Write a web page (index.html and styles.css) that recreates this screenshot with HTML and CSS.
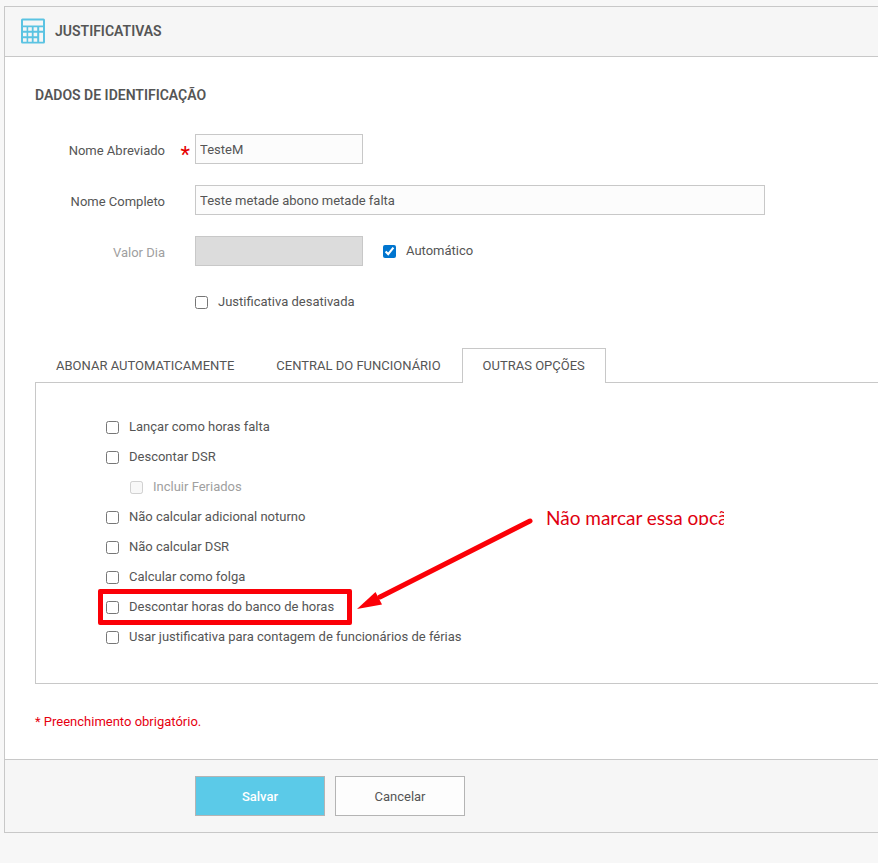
FILE: index.html
```html
<!DOCTYPE html>
<html lang="pt-BR">
<head>
<meta charset="utf-8">
<title>Justificativas</title>
<link rel="stylesheet" href="styles.css">
</head>
<body>
<main class="card">
  <header class="card-header">
    <svg class="card-icon" viewBox="0 0 24 26" aria-hidden="true">
      <path fill="#5bc3e2" fill-rule="evenodd" d="M1.500 0.500h21a1.500 1.500 0 0 1 1.500 1.500v22a1.500 1.500 0 0 1-1.500 1.500h-21a1.500 1.500 0 0 1-1.500-1.500v-22a1.500 1.500 0 0 1 1.500-1.500z M2 2.500v5h20v-5z M2 9.200v3.600h3.600v-3.600z M7.200 9.200v3.600h3.600v-3.600z M12.600 9.200v3.600h3.600v-3.600z M18.200 9.200v3.600h3.800v-3.600z M2 14.700v3.600h3.600v-3.600z M7.200 14.700v3.600h3.600v-3.600z M12.600 14.700v3.600h3.600v-3.600z M18.200 14.700v9h3.800v-9z M2 20.200v3.600h3.600v-3.600z M7.200 20.200v3.600h3.600v-3.600z M12.600 20.200v3.600h3.600v-3.600z"/>
    </svg>
    <h1 class="heading">JUSTIFICATIVAS</h1>
  </header>
  <form>
    <div class="card-body">
      <h2 class="heading">DADOS DE IDENTIFICAÇÃO</h2>
      <div class="fields">
        <div class="row">
          <label class="label" for="abreviado">Nome Abreviado</label>
          <span class="required">*</span>
          <input class="text short" id="abreviado" type="text" value="TesteM">
        </div>
        <div class="row">
          <label class="label" for="completo">Nome Completo</label>
          <span class="required"></span>
          <input class="text long" id="completo" type="text" value="Teste metade abono metade falta">
        </div>
        <div class="row">
          <label class="label muted" for="valor">Valor Dia</label>
          <span class="required"></span>
          <input class="text short" id="valor" type="text" disabled>
          <label class="check auto"><input type="checkbox" checked><span>Automático</span></label>
        </div>
        <div class="row">
          <span class="label"></span>
          <span class="required"></span>
          <label class="check"><input type="checkbox"><span>Justificativa desativada</span></label>
        </div>
      </div>
      <div class="tabs" role="tablist">
        <button class="tab" type="button" role="tab">ABONAR AUTOMATICAMENTE</button>
        <button class="tab" type="button" role="tab">CENTRAL DO FUNCIONÁRIO</button>
        <button class="tab active" type="button" role="tab" aria-selected="true">OUTRAS OPÇÕES</button>
      </div>
      <ul class="panel" role="tabpanel">
        <li><label class="check"><input type="checkbox"><span>Lançar como horas falta</span></label></li>
        <li><label class="check"><input type="checkbox"><span>Descontar DSR</span></label></li>
        <li class="nested"><label class="check muted"><input type="checkbox" disabled><span>Incluir Feriados</span></label></li>
        <li><label class="check"><input type="checkbox"><span>Não calcular adicional noturno</span></label></li>
        <li><label class="check"><input type="checkbox"><span>Não calcular DSR</span></label></li>
        <li><label class="check"><input type="checkbox"><span>Calcular como folga</span></label></li>
        <li class="marked">
          <label class="check"><input type="checkbox"><span>Descontar horas do banco de horas</span></label>
          <span class="frame"></span>
          <svg class="arrow" viewBox="0 0 180 100" aria-hidden="true">
            <path d="M174 8L24 84" stroke="#fb0007" stroke-width="5" stroke-linecap="round"/>
            <path d="M1 96L19.500 79L26 91.500z" fill="#fb0007"/>
          </svg>
          <span class="note">Não marcar essa opção</span>
        </li>
        <li><label class="check"><input type="checkbox"><span>Usar justificativa para contagem de funcionários de férias</span></label></li>
      </ul>
      <p class="hint">* Preenchimento obrigatório.</p>
    </div>
    <footer class="card-footer">
      <button class="button primary" type="button">Salvar</button>
      <button class="button" type="button">Cancelar</button>
    </footer>
  </form>
</main>
</body>
</html>
```
FILE: styles.css
```css
* {
  box-sizing: border-box;
}

body {
  margin: 0;
  padding: 6px 0 0 4px;
  background: #f7f7f7;
  color: #555;
  font: 13px/20px Roboto, sans-serif;
  overflow-x: hidden;
}

input,
button {
  font: inherit;
  color: inherit;
}

.card {
  border: 1px solid #c8c8c8;
  border-right: 0;
  background: #fff;
}

.card-header {
  display: flex;
  align-items: center;
  gap: 10px;
  height: 50px;
  padding: 0 0 2px 16px;
  border-bottom: 1px solid #c8c8c8;
  background: #f6f6f6;
}

.card-icon {
  width: 24px;
  height: 26px;
}

.heading {
  margin: 0;
  font-size: 14px;
  font-weight: 600;
  line-height: 20px;
}

.card-body {
  padding: 28px 0 27px 30px;
}

.fields {
  display: grid;
  gap: 21px;
  margin-top: 29px;
}

.row {
  display: flex;
  align-items: center;
  height: 30px;
}

.label {
  width: 130px;
  padding-top: 3px;
  text-align: right;
}

.required {
  width: 30px;
  padding: 12px 5px 0 0;
  color: #e60000;
  font-size: 22px;
  text-align: right;
}

.muted {
  color: #a0a0a0;
}

.text {
  height: 30px;
  padding: 0 4px;
  border: 1px solid #c8c8c8;
  border-radius: 0;
  background: #fcfcfc;
}

.text:disabled {
  background: #dcdcdc;
}

.short {
  width: 168px;
}

.long {
  width: 570px;
}

.check {
  display: flex;
  align-items: center;
  gap: 10px;
}

.check input {
  width: 13px;
  height: 13px;
  margin: 0;
  accent-color: #0075cf;
}

.auto {
  margin-left: 20px;
}

.tabs {
  display: flex;
  margin-top: 31px;
}

.tab {
  height: 35px;
  padding: 0 20px;
  border: 1px solid transparent;
  border-bottom: 0;
  background: none;
  white-space: nowrap;
}

.tab.active {
  position: relative;
  z-index: 1;
  border-color: #c8c8c8;
  background: #fff;
}

.panel {
  margin: -1px 0 0;
  padding: 29px 0 31px 70px;
  border: 1px solid #c8c8c8;
  border-right: 0;
  list-style: none;
}

.panel li {
  display: flex;
  align-items: center;
  height: 30px;
}

.panel .nested {
  padding-left: 24px;
}

.marked {
  position: relative;
}

.frame {
  position: absolute;
  left: -8px;
  top: -3px;
  width: 254px;
  height: 36px;
  border: 5px solid #fb0007;
  border-radius: 2px;
  pointer-events: none;
}

.arrow {
  position: absolute;
  left: 250px;
  top: -79px;
  width: 180px;
  height: 100px;
  fill: none;
}

.note {
  position: absolute;
  left: 440px;
  top: -88px;
  width: 178px;
  height: 21px;
  overflow: hidden;
  color: #e00010;
  font: 19px/28px Lato, sans-serif;
  white-space: nowrap;
}

.hint {
  margin: 28px 0 0;
  color: #e60010;
}

.card-footer {
  display: flex;
  gap: 10px;
  padding: 16px 0 16px 190px;
  border-top: 1px solid #c8c8c8;
  background: #f6f6f6;
}

.button {
  width: 130px;
  height: 40px;
  padding-top: 2px;
  border: 1px solid #b4b4b4;
  background: #fdfdfd;
}

.primary {
  background: #5bcae8;
  color: #fff;
  font-weight: 500;
}
```
